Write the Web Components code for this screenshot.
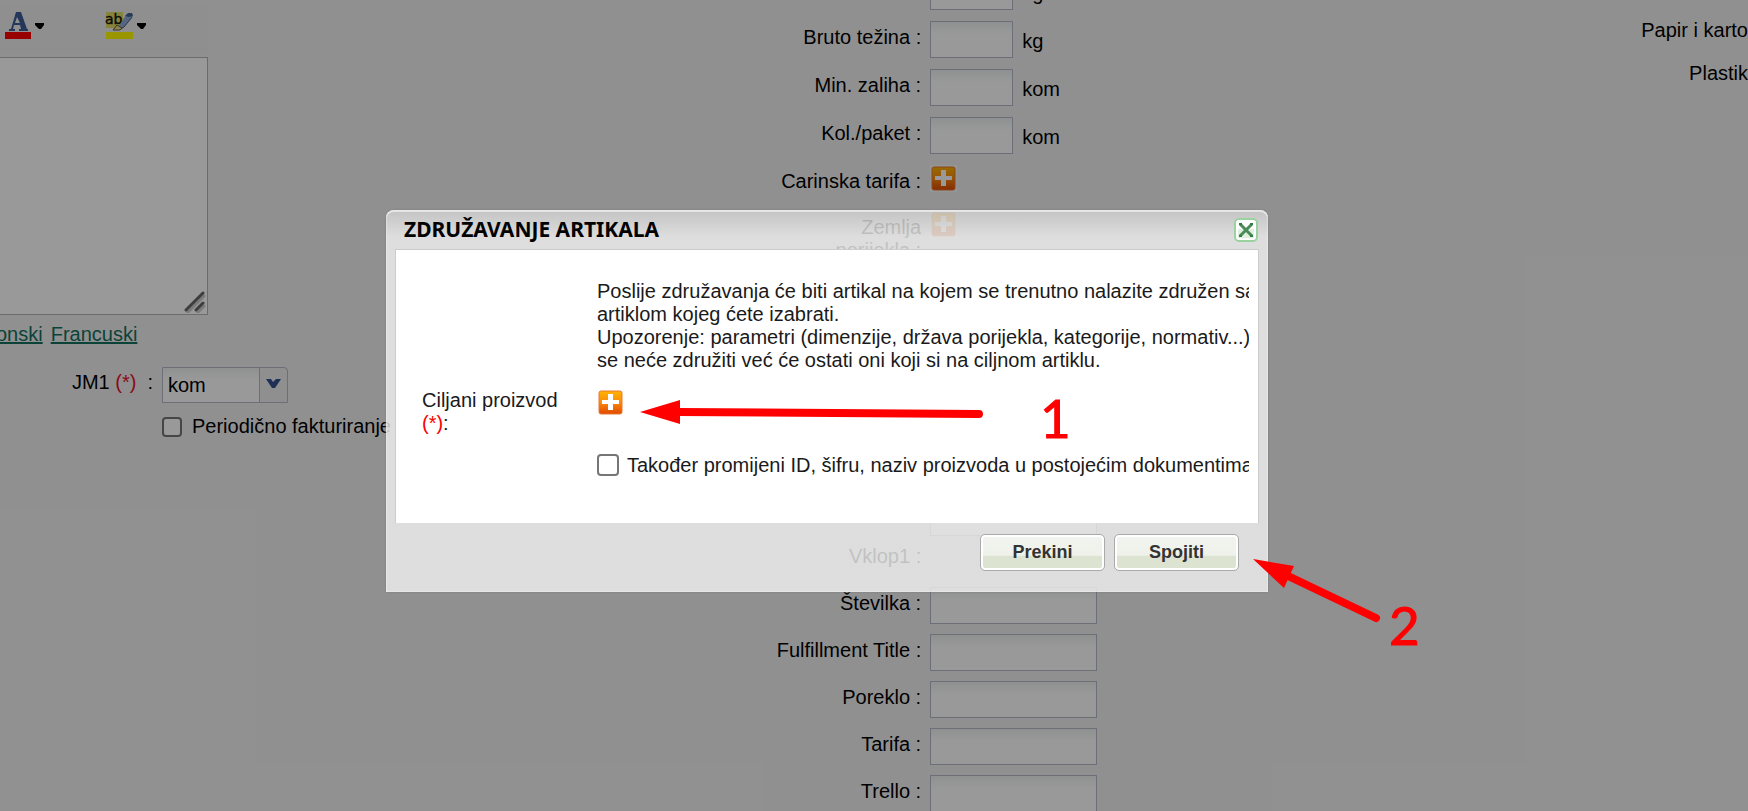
<!DOCTYPE html>
<html lang="hr">
<head>
<meta charset="utf-8">
<title>Združavanje artikala</title>
<style>
  html, body {
    margin: 0;
    height: 100%;
    overflow: hidden;
  }
  body {
    background: #f1f1f1;
    color: #000;
    font: 20px/23px "Liberation Sans", Arial, sans-serif;
  }
</style>
</head>
<body>
<article-page></article-page>

<script>
class PlusButton extends HTMLElement {
  constructor() {
    super();
    this.attachShadow({ mode: 'open' });
    this.shadowRoot.innerHTML = `
      <style>
        :host { display: block; }
        button { display: block; border: 0; padding: 0; background: none; cursor: pointer; }
        svg { display: block; }
      </style>
      <button type="button" aria-label="Dodaj">
        <svg width="27" height="27" viewBox="0 0 27 27">
          <defs>
            <linearGradient id="fill" x1="0" y1="0" x2="0" y2="1">
              <stop offset="0" stop-color="#ffb400"/>
              <stop offset=".5" stop-color="#fa8a0c"/>
              <stop offset="1" stop-color="#e04800"/>
            </linearGradient>
          </defs>
          <rect x="0" y="0" width="27" height="27" fill="#fff" opacity=".5"/>
          <rect x="2" y="2" width="23" height="23" rx="2" fill="url(#fill)" stroke="#e87830"/>
          <path d="M11 5h5v6h6v4h-6v6h-5v-6H5v-4h6z" fill="#fff"/>
        </svg>
      </button>
    `;
  }
}
customElements.define('plus-button', PlusButton);

// one label / value line of the article form
class FormRow extends HTMLElement {
  constructor() {
    super();
    this.attachShadow({ mode: 'open' });
  }

  connectedCallback() {
    const label = this.getAttribute('label') || '';
    const unit = this.getAttribute('unit') || '';
    const type = this.getAttribute('type') || 'text';
    let control = '';
    if (type === 'text') {
      control = `<input id="value" type="text" ${label ? '' : 'aria-label="Vrijednost"'}>`;
    } else if (type === 'plus') {
      control = '<plus-button></plus-button>';
    }
    this.shadowRoot.innerHTML = `
      <style>
        :host { display: flex; align-items: flex-start; gap: 9px; min-height: var(--row, 48px); }
        .label { flex: 0 0 222px; display: flex; justify-content: flex-end; padding-top: 5px; text-align: right; }
        :host([narrow]) .label > * { width: 90px; }
        input {
          box-sizing: border-box;
          width: 83px;
          height: 37px;
          margin: 0;
          border: 1px solid #b5b8c8;
          border-radius: 0;
          background: linear-gradient(#eef2f0, #fff 12px);
          font: inherit;
        }
        :host([wide]) input { width: 167px; }
        .unit { padding-top: 9px; }
      </style>
      <div class="label">${type === 'text' ? `<label for="value">${label}</label>` : `<span>${label}</span>`}</div>
      ${control}
      ${unit ? `<span class="unit">${unit}</span>` : ''}
    `;
  }
}
customElements.define('form-row', FormRow);

class RichEditor extends HTMLElement {
  constructor() {
    super();
    this.attachShadow({ mode: 'open' });
    this.shadowRoot.innerHTML = `
      <style>
        :host { display: block; padding-top: 4px; }
        .toolbar { display: flex; gap: 60px; box-sizing: border-box; height: 50px; padding: 7px 0 0 4px; background: #eee; }
        button { display: flex; align-items: flex-start; gap: 3px; border: 0; padding: 0; background: none; height: 30px; }
        svg { display: block; }
        .area { position: relative; margin-top: 3px; }
        textarea {
          display: block;
          box-sizing: border-box;
          width: 100%;
          height: 258px;
          margin: 0;
          border: 1px solid #b4b4b4;
          border-left: 0;
          background: #fff;
          resize: none;
        }
        .grip { position: absolute; right: 2px; bottom: 2px; }
      </style>
      <div class="toolbar">
        <button type="button" aria-label="Boja teksta">
          <svg width="28" height="29" viewBox="0 0 28 29">
            <path d="M12 1h5l6 17h1v2h-9v-2h2l-1-4H10l-1 4h2v2H5v-2h2z M13 6l-2 6h5z" fill="#3c5c98" fill-rule="evenodd"/>
            <rect x="1" y="21" width="26" height="7" fill="#ff0000"/>
          </svg>
          <svg width="10" height="20" viewBox="0 0 10 20"><path d="M0 12h9v2L6 18H4L0 14z" fill="#000"/></svg>
        </button>
        <button type="button" aria-label="Boja pozadine">
          <svg width="28" height="29" viewBox="0 0 28 29">
            <rect x="1" y="1" width="17" height="16" fill="#dedc60"/>
            <text x="0" y="13" font-family="DejaVu Sans, sans-serif" font-size="14" fill="#111" stroke="#111" stroke-width=".4">ab</text>
            <path d="M14 15L21 4l4-2 3 2-1 3-8 9-4 2z" fill="#8fa9d6"/>
            <path d="M20 5l3-3h4l1 3-4 1z" fill="#46628f"/>
            <path d="M27 6l-8 10-3 2" fill="none" stroke="#46628f"/>
            <path d="M8 19l4-5 5 3-2 2z" fill="#e6d795" stroke="#665a2a"/>
            <rect x="1" y="21" width="27" height="7" fill="#fffb00"/>
          </svg>
          <svg width="10" height="20" viewBox="0 0 10 20"><path d="M1 12h9v2L7 18H5L1 14z" fill="#000"/></svg>
        </button>
      </div>
      <div class="area">
        <textarea aria-label="Opis"></textarea>
        <svg class="grip" width="22" height="22" viewBox="0 0 22 22" fill="none" stroke-width="3" stroke-linecap="round">
          <path d="M4 21L20 5M14 21L20 15" stroke="#ccc"/>
          <path d="M2 19L19 2M12 19L19 12" stroke="#666"/>
        </svg>
      </div>
    `;
  }
}
customElements.define('rich-editor', RichEditor);

class CheckLine extends HTMLElement {
  constructor() {
    super();
    this.attachShadow({ mode: 'open' });
    this.shadowRoot.innerHTML = `
      <style>
        :host { display: block; white-space: nowrap; }
        label { display: flex; align-items: center; gap: var(--gap, 8px); }
        span { padding-top: var(--text-top, 0); }
        input {
          appearance: none;
          box-sizing: border-box;
          flex: none;
          width: var(--box, 22px);
          height: var(--box, 22px);
          margin: 0;
          border: 2px solid #767676;
          border-radius: 4px;
          background: #fff;
        }
      </style>
      <label><input type="checkbox"><span><slot></slot></span></label>
    `;
  }
}
customElements.define('check-line', CheckLine);

class MergeDialog extends HTMLElement {
  constructor() {
    super();
    this.attachShadow({ mode: 'open' });
    this.shadowRoot.innerHTML = `
      <style>
        :host {
          display: block;
          box-sizing: border-box;
          width: 100%;
          max-width: 882px;
          padding: 0 9px;
          border-radius: 8px 8px 0 0;
          background: linear-gradient(rgba(208, 208, 208, .8), rgba(241, 241, 241, .8) 27px);
          box-shadow: inset 0 2px 0 rgba(255, 255, 255, .5), inset 0 0 2px #fff, 0 0 2px #777;
        }
        header { display: flex; justify-content: space-between; align-items: center; height: 39px; padding: 0 1px 0 9px; }
        h1 { margin: 0; font: bold 21px/27px "Noto Sans", sans-serif; }
        .close { display: block; border: 0; padding: 0; background: none; }
        .close svg { display: block; }
        .body {
          box-sizing: border-box;
          padding: 30px 9px 46px 26px;
          border: 1px solid #ccc;
          border-bottom: 0;
          background: #fff;
          color: #1a1a1a;
        }
        .grid { display: grid; grid-template-columns: 175px minmax(0, 1fr); row-gap: 17px; overflow: hidden; }
        p { margin: 0; grid-column: 2; white-space: nowrap; overflow: hidden; }
        .name { width: 150px; }
        .name b { color: #f00; font-weight: normal; }
        check-line { grid-column: 2; --text-top: 2px; }
        footer { display: flex; justify-content: flex-end; gap: 9px; padding: 11px 20px 21px; }
        footer button {
          box-sizing: border-box;
          width: 125px;
          height: 37px;
          border: 1px solid #aaa;
          border-radius: 5px;
          background: linear-gradient(#f2f3f0, #eff2ea 58%, #dde3d1 60%, #dde3d1);
          box-shadow: inset 0 0 0 2px #fff;
          color: #333;
          font: bold 18px/23px "Liberation Sans", Arial, sans-serif;
        }
      </style>
      <header>
        <h1>ZDRUŽAVANJE ARTIKALA</h1>
        <button class="close" type="button" aria-label="Zatvori">
          <svg width="24" height="24" viewBox="0 0 24 24">
            <rect x="1" y="1" width="22" height="22" rx="4" fill="#fff" stroke="#9bd3a0" stroke-width="2"/>
            <rect x="4" y="11" width="16" height="9" fill="#e0f0e0"/>
            <path d="M6 6l12 12M18 6L6 18" stroke="#4a8c56" stroke-width="3"/>
            <path d="M5 5h3v2H5zM16 5h3v2h-3zM5 17h3v2H5zM16 17h3v2h-3z" fill="#347c44"/>
          </svg>
        </button>
      </header>
      <div class="body">
        <div class="grid">
          <p>Poslije združavanja će biti artikal na kojem se trenutno nalazite združen sa<br>artiklom kojeg ćete izabrati.<br>Upozorenje: parametri (dimenzije, država porijekla, kategorije, normativ...)<br>se neće združiti već će ostati oni koji si na ciljnom artiklu.</p>
          <div class="name">Ciljani proizvod <b>(*)</b>:</div>
          <plus-button></plus-button>
          <check-line>Također promijeni ID, šifru, naziv proizvoda u postojećim dokumentima</check-line>
        </div>
      </div>
      <footer>
        <button type="button">Prekini</button>
        <button type="button">Spojiti</button>
      </footer>
    `;
  }
}
customElements.define('merge-dialog', MergeDialog);

// numbered arrows drawn over the page
class StepMarks extends HTMLElement {
  constructor() {
    super();
    this.attachShadow({ mode: 'open' });
    this.shadowRoot.innerHTML = `
      <style>
        :host { display: block; position: absolute; top: 0; left: 0; pointer-events: none; }
        svg { display: block; }
        text { font: 53px Lato, sans-serif; }
      </style>
      <svg width="1748" height="811" viewBox="0 0 1748 811" fill="#f00" stroke="#f00">
        <path d="M640 412L680 400V424Z" stroke="none"/>
        <path d="M678 412L979 414" stroke-width="8" stroke-linecap="round"/>
        <path d="M1253 559L1294 566L1284 588Z" stroke="none"/>
        <path d="M1286 575L1376 618" stroke-width="8" stroke-linecap="round"/>
        <text x="1040" y="438" stroke-width="1">1</text>
        <text x="1389" y="645" stroke-width="1">2</text>
      </svg>
    `;
  }
}
customElements.define('step-marks', StepMarks);

class ArticlePage extends HTMLElement {
  constructor() {
    super();
    this.attachShadow({ mode: 'open' });
    this.shadowRoot.innerHTML = `
      <style>
        :host { display: block; position: relative; height: 100%; overflow: hidden; }
        .columns { display: grid; grid-template-columns: 40% minmax(0, 1fr) 16%; height: 100%; }
        rich-editor { width: 208px; }
        .langs { display: flex; gap: 8px; margin: 8px 0 0 -4px; }
        a { color: #14705f; }
        .measure { display: flex; gap: 9px; margin-top: 21px; }
        .measure label { width: 153px; padding-top: 4px; text-align: right; white-space: pre; }
        .measure b { color: #e8112d; font-weight: normal; }
        .select { position: relative; }
        select {
          appearance: none;
          display: block;
          box-sizing: border-box;
          width: 126px;
          height: 36px;
          padding: 0 5px;
          border: 1px solid #b5b8c8;
          border-radius: 0 4px 0 0;
          background: linear-gradient(90deg, transparent 96px, #b5b8c8 96px, #b5b8c8 97px, #eee 97px), linear-gradient(#eef2f0, #fff 12px);
          color: #000;
          font: inherit;
        }
        .select svg { position: absolute; right: 7px; top: 12px; pointer-events: none; }
        check-line { --box: 20px; --gap: 10px; margin: 12px 0 0 162px; }
        .middle { margin-top: -27px; }
        form-row[type="plus"] { --row: 46px; }
        .lower { --row: 47px; margin-top: 237px; }
        .short { --row: 41px; }
        .right { display: flex; flex-direction: column; align-items: flex-end; gap: 20px; padding-top: 19px; }
        .mask { position: absolute; inset: 0; background: rgba(0, 0, 0, .4); }
        .layer { position: absolute; inset: 0; display: flex; justify-content: center; align-items: flex-start; padding: 210px 94px 0 0; }
      </style>
      <div class="columns">
        <section>
          <rich-editor></rich-editor>
          <nav class="langs"><a href="#">onski</a><a href="#">Francuski</a></nav>
          <div class="measure">
            <label for="jm1">JM1 <b>(*)</b>  :</label>
            <div class="select">
              <select id="jm1"><option>kom</option></select>
              <svg width="15" height="10" viewBox="0 0 15 10"><path d="M0 0h5l2 3 3-3h5L9 9H6z" fill="#33508f"/></svg>
            </div>
          </div>
          <check-line>Periodično fakturiranje</check-line>
        </section>
        <section class="middle">
          <form-row unit="kg"></form-row>
          <form-row label="Bruto težina :" unit="kg"></form-row>
          <form-row label="Min. zaliha :" unit="kom"></form-row>
          <form-row label="Kol./paket :" unit="kom"></form-row>
          <form-row label="Carinska tarifa :" type="plus"></form-row>
          <form-row label="Zemlja porijekla :" type="plus" narrow></form-row>
          <div class="lower">
            <form-row class="short" wide></form-row>
            <form-row label="Vklop1 :" type="none"></form-row>
            <form-row label="Številka :" wide></form-row>
            <form-row label="Fulfillment Title :" wide></form-row>
            <form-row label="Poreklo :" wide></form-row>
            <form-row label="Tarifa :" wide></form-row>
            <form-row label="Trello :" wide></form-row>
          </div>
        </section>
        <section class="right">
          <span>Papir i karto</span>
          <span>Plastik</span>
        </section>
      </div>
      <div class="mask"></div>
      <div class="layer"><merge-dialog role="dialog"></merge-dialog></div>
      <step-marks></step-marks>
    `;
  }
}
customElements.define('article-page', ArticlePage);
</script>
</body>
</html>
